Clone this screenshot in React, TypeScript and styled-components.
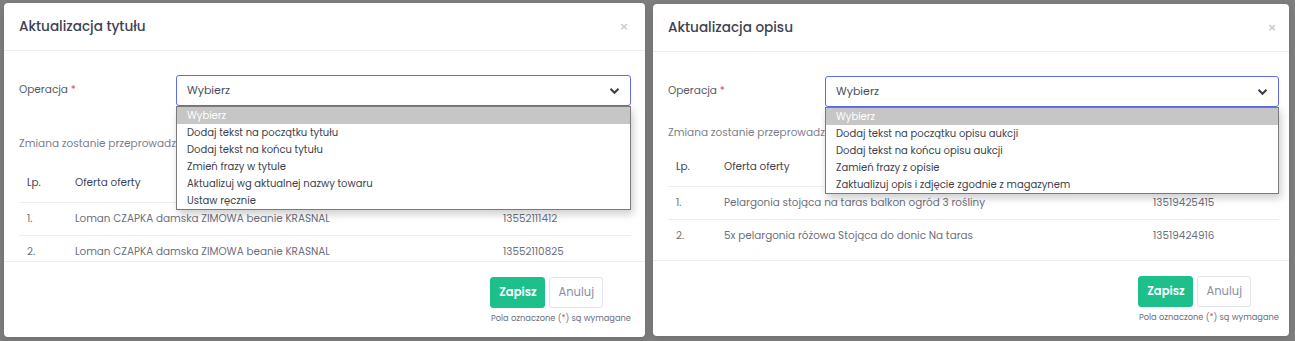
import styled, { createGlobalStyle } from "styled-components";

const GlobalStyle = createGlobalStyle`
  html, body {
    margin: 0;
    padding: 0;
    background: #7f7f7f;
  }
  * {
    box-sizing: border-box;
  }
`;

const Colors = {
  text: "#3f4254",
  muted: "#6c6f80",
  line: "#ebedf3",
  blue: "#5b6cf0",
  green: "#1dbf8b",
  red: "#e5484d",
};

export const Backdrop = styled.div`
  display: flex;
  align-items: flex-start;
  gap: 8px;
  height: 341px;
  padding: 3px 0 0 4px;
  overflow: hidden;
  background: #7f7f7f;
  font-family: Poppins, Inter, "Noto Sans", sans-serif;
`;

export const Modal = styled.div<{ $width: number; $top: number }>`
  width: ${(p) => p.$width}px;
  margin-top: ${(p) => p.$top}px;
  background: #fff;
  border-radius: 4px;
  display: flex;
  flex-direction: column;
  box-shadow: 0 2px 8px rgba(0, 0, 0, 0.15);
`;

export const Header = styled.div<{ $pad: number }>`
  height: 48px;
  padding: 0 ${(p) => p.$pad + 2}px 0 15px;
  display: flex;
  align-items: center;
  justify-content: space-between;
  border-bottom: 1px solid ${Colors.line};
`;

export const Title = styled.h5`
  margin: 0;
  font-size: 13.6px;
  font-weight: 500;
  color: ${Colors.text};
`;

export const Close = styled.span`
  font-size: 15px;
  color: #c3c5cf;
  line-height: 1;
`;

export const Body = styled.div<{ $height: number; $pad: number }>`
  height: ${(p) => p.$height}px;
  padding: 24px ${(p) => p.$pad}px 0 15px;
  position: relative;
`;

export const FormRow = styled.div`
  display: grid;
  grid-template-columns: 157px 1fr;
  align-items: start;
`;

export const Label = styled.label`
  font-size: 10.5px;
  color: #555866;
  padding-top: 7px;
  span {
    color: ${Colors.red};
  }
`;

export const SelectWrap = styled.div`
  position: relative;
`;

export const SelectBox = styled.div`
  height: 31px;
  border: 1px solid ${Colors.blue};
  border-radius: 3px;
  padding: 0 10px;
  display: flex;
  align-items: center;
  justify-content: space-between;
  font-size: 11px;
  color: #4a4d5c;
`;

export const Options = styled.ul`
  position: absolute;
  left: 0;
  right: 0;
  top: 31px;
  margin: 0;
  padding: 0;
  list-style: none;
  background: #fff;
  border: 1px solid #7a7a7a;
  box-shadow: 2px 4px 8px rgba(0, 0, 0, 0.2);
  z-index: 5;
`;

export const Option = styled.li<{ $active?: boolean }>`
  height: 17px;
  line-height: 17px;
  padding: 0 10px;
  font-size: 10px;
  color: ${(p) => (p.$active ? "#fff" : "#3c3f4d")};
  background: ${(p) => (p.$active ? "#c6c6c6" : "#fff")};
`;

export const Note = styled.p<{ $gap: number }>`
  margin: ${(p) => p.$gap}px 0 0;
  font-size: 10.5px;
  color: #7b7e8c;
`;

export const Table = styled.table<{ $gap: number }>`
  width: 100%;
  border-collapse: collapse;
  margin-top: ${(p) => p.$gap}px;
  font-size: 10.4px;
  th, td {
    text-align: left;
    padding: 0 8px;
    border-bottom: 1px solid ${Colors.line};
  }
  th {
    height: 37px;
    font-weight: 400;
    color: ${Colors.text};
  }
  td {
    height: 33px;
    color: #6c6f7d;
  }
  tr:last-child td {
    border-bottom: none;
  }
`;

export const Footer = styled.div<{ $pad: number }>`
  border-top: 1px solid ${Colors.line};
  padding: 15px ${(p) => p.$pad}px 12px 0;
  display: flex;
  flex-direction: column;
  align-items: flex-end;
`;

export const Buttons = styled.div`
  display: flex;
  gap: 4px;
  margin-right: 28px;
`;

export const Button = styled.button<{ $primary?: boolean }>`
  height: 31px;
  padding: 0 8px;
  border-radius: 3px;
  font-family: inherit;
  font-size: 11.5px;
  font-weight: ${(p) => (p.$primary ? 600 : 400)};
  color: ${(p) => (p.$primary ? "#fff" : "#8d90a3")};
  background: ${(p) => (p.$primary ? Colors.green : "#fff")};
  border: 1px solid ${(p) => (p.$primary ? Colors.green : "#e1e3ee")};
`;

export const Required = styled.div`
  margin-top: 4px;
  font-size: 8.3px;
  color: #6c6f7d;
  span {
    color: ${Colors.red};
  }
`;

const Chevron = () => (
  <svg width="11" height="8" viewBox="0 0 11 8">
    <path d="M1.5 1.8 5.5 5.8 9.5 1.8" fill="none" stroke="#3b3e4a" strokeWidth="2" />
  </svg>
);

type Row = { title: string; id: string };

type DialogProps = {
  title: string;
  width: number;
  top: number;
  pad: number;
  options: string[];
  rows: Row[];
  noteGap: number;
  tableGap: number;
  numberCol: number;
  bodyHeight: number;
};

const Dialog = (props: DialogProps) => {
  return (
    <Modal $width={props.width} $top={props.top}>
      <Header $pad={props.pad}>
        <Title>{props.title}</Title>
        <Close>×</Close>
      </Header>
      <Body $height={props.bodyHeight} $pad={props.pad}>
        <FormRow>
          <Label>
            Operacja <span>*</span>
          </Label>
          <SelectWrap>
            <SelectBox>
              Wybierz
              <Chevron />
            </SelectBox>
            <Options>
              <Option $active>Wybierz</Option>
              {props.options.map((o) => (
                <Option key={o}>{o}</Option>
              ))}
            </Options>
          </SelectWrap>
        </FormRow>
        <Note $gap={props.noteGap}>Zmiana zostanie przeprowadzona dla wybranych ofert.</Note>
        <Table $gap={props.tableGap}>
          <colgroup>
            <col style={{ width: 48 }} />
            <col style={{ width: props.numberCol - 48 }} />
            <col />
          </colgroup>
          <thead>
            <tr>
              <th>Lp.</th>
              <th>Oferta oferty</th>
              <th></th>
            </tr>
          </thead>
          <tbody>
            {props.rows.map((r, i) => (
              <tr key={r.id}>
                <td>{i + 1}.</td>
                <td>{r.title}</td>
                <td>{r.id}</td>
              </tr>
            ))}
          </tbody>
        </Table>
      </Body>
      <Footer $pad={props.pad}>
        <Buttons>
          <Button $primary>Zapisz</Button>
          <Button>Anuluj</Button>
        </Buttons>
        <Required>
          Pola oznaczone (<span>*</span>) są wymagane
        </Required>
      </Footer>
    </Modal>
  );
};

const App = () => {
  return (
    <>
      <GlobalStyle />
      <Backdrop>
        <Dialog
          title="Aktualizacja tytułu"
          width={641}
          top={0}
          pad={14}
          noteGap={30}
          tableGap={13}
          numberCol={476}
          bodyHeight={210}
          options={[
            "Dodaj tekst na początku tytułu",
            "Dodaj tekst na końcu tytułu",
            "Zmień frazy w tytule",
            "Aktualizuj wg aktualnej nazwy towaru",
            "Ustaw ręcznie",
          ]}
          rows={[
            { title: "Loman CZAPKA damska ZIMOWA beanie KRASNAL", id: "13552111412" },
            { title: "Loman CZAPKA damska ZIMOWA beanie KRASNAL", id: "13552110825" },
          ]}
        />
        <Dialog
          title="Aktualizacja opisu"
          width={636}
          top={1}
          pad={10}
          noteGap={18}
          tableGap={8}
          numberCol={477}
          bodyHeight={208}
          options={[
            "Dodaj tekst na początku opisu aukcji",
            "Dodaj tekst na końcu opisu aukcji",
            "Zamień frazy z opisie",
            "Zaktualizuj opis i zdjęcie zgodnie z magazynem",
          ]}
          rows={[
            { title: "Pelargonia stojąca na taras balkon ogród 3 rośliny", id: "13519425415" },
            { title: "5x pelargonia różowa Stojąca do donic Na taras", id: "13519424916" },
          ]}
        />
      </Backdrop>
    </>
  );
};

export default App;
